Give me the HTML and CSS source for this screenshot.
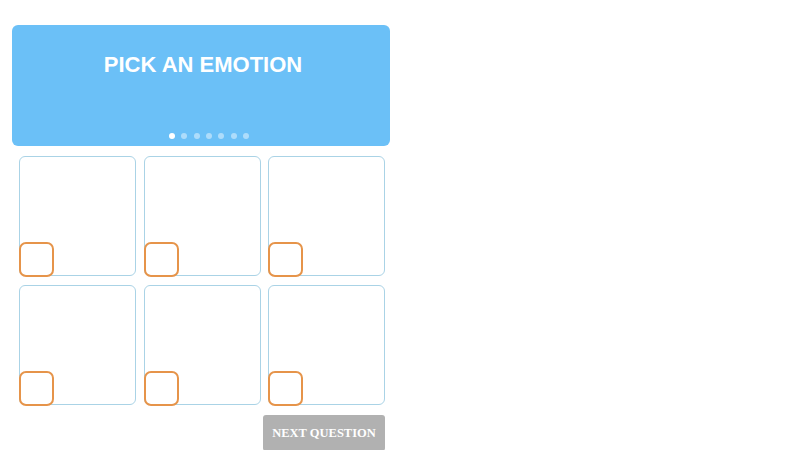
FILE: index.html
```html
<!DOCTYPE html>
<html>
<head>
<meta charset="utf-8">
<link rel="stylesheet" href="styles.css">
</head>
<body>
<div class="app">
  <div class="banner">
    <h1 class="title">PICK AN EMOTION</h1>
    <div class="dots">
      <span class="dot active"></span>
      <span class="dot"></span>
      <span class="dot"></span>
      <span class="dot"></span>
      <span class="dot"></span>
      <span class="dot"></span>
      <span class="dot"></span>
    </div>
  </div>
  <div class="grid">
    <div class="card"><span class="check"></span></div>
    <div class="card"><span class="check"></span></div>
    <div class="card"><span class="check"></span></div>
    <div class="card"><span class="check"></span></div>
    <div class="card"><span class="check"></span></div>
    <div class="card"><span class="check"></span></div>
  </div>
  <div class="actions">
    <button class="next">NEXT QUESTION</button>
  </div>
</div>
</body>
</html>
```
FILE: styles.css
```css
html, body {
  margin: 0;
  padding: 0;
  background: #ffffff;
}
.app {
  width: 378px;
  margin: 25px 0 0 12px;
}
.banner {
  height: 121px;
  background: #6bc0f7;
  border-radius: 6px;
  display: flex;
  flex-direction: column;
  align-items: center;
  box-sizing: border-box;
  padding-top: 27px;
}
.title {
  margin: 0 0 0 4px;
  font-family: "Liberation Sans", Arial, sans-serif;
  font-weight: bold;
  font-size: 22px;
  line-height: 26px;
  color: #ffffff;
}
.dots {
  margin: auto 0 7px 16px;
  display: flex;
  gap: 6.4px;
}
.dot {
  width: 6px;
  height: 6px;
  border-radius: 50%;
  background: rgba(255, 255, 255, 0.45);
}
.dot.active {
  background: #ffffff;
}
.grid {
  margin: 10px 5px 0 7px;
  display: grid;
  grid-template-columns: repeat(3, 117px);
  column-gap: 7.5px;
  row-gap: 9px;
}
.card {
  position: relative;
  height: 120px;
  border: 1.8px solid #aad3e6;
  border-radius: 6px;
  box-sizing: border-box;
}
.check {
  position: absolute;
  left: -1px;
  bottom: -1.8px;
  width: 35px;
  height: 35px;
  border: 2px solid #e6944a;
  border-radius: 7px;
  box-sizing: border-box;
}
.actions {
  display: flex;
  justify-content: flex-end;
  margin: 10px 5px 0 0;
}
.next {
  width: 122px;
  height: 36px;
  background: #b1b1b1;
  border: none;
  border-radius: 3px;
  color: #ffffff;
  font-family: "Liberation Serif", "Times New Roman", serif;
  font-weight: bold;
  font-size: 12.5px;
  padding: 0;
}
```
